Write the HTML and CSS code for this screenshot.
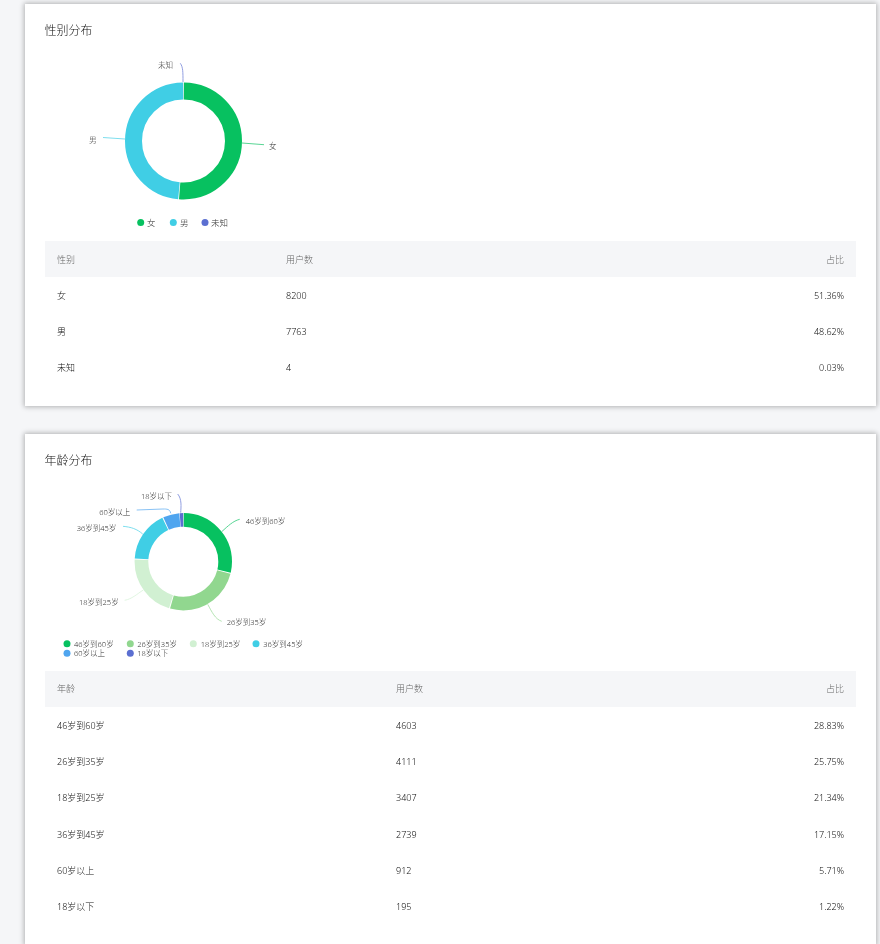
FILE: index.html
```html
<!DOCTYPE html>
<html lang="zh-CN">
<head>
<meta charset="utf-8">
<title>用户分布</title>
<link rel="stylesheet" href="styles.css">
</head>
<body>
<main class="page">
  <section class="card">
    <h2 class="card-title">性别分布</h2>
    <svg class="chart" viewBox="0 0 280 202" width="280" height="202">
      <g transform="rotate(-90 138.5 102)" fill="none" stroke-width="17">
        <circle class="s-green" cx="138.5" cy="102" r="50" pathLength="100" stroke-dasharray="51.14 48.86" stroke-dashoffset="-0.11"/>
        <circle class="s-cyan" cx="138.5" cy="102" r="50" pathLength="100" stroke-dasharray="48.4 51.6" stroke-dashoffset="-51.47"/>
        <circle class="s-indigo" cx="138.5" cy="102" r="50" pathLength="100" stroke-dasharray="0.02 99.98" stroke-dashoffset="-99.97"/>
      </g>
      <g fill="none" class="leaders">
        <path class="s-indigo" d="M138 43 C138 33 138 28 135.3 24.3"/>
        <path class="s-cyan" d="M80 100 L58 98.5"/>
        <path class="s-green" d="M197 104 L219 105.7"/>
      </g>
      <text class="label" x="113" y="29">未知</text>
      <text class="label" x="44" y="104">男</text>
      <text class="label" x="224" y="109.5">女</text>
      <circle class="f-green" cx="95.7" cy="183.6" r="3.5"/>
      <circle class="f-cyan" cx="128.3" cy="183.6" r="3.5"/>
      <circle class="f-indigo" cx="160" cy="183.6" r="3.5"/>
      <text class="legend-lg" x="102" y="186.6">女</text>
      <text class="legend-lg" x="135" y="186.6">男</text>
      <text class="legend-lg" x="166" y="186.6">未知</text>
    </svg>
    <table class="data gender">
      <thead><tr><th>性别</th><th>用户数</th><th class="num">占比</th></tr></thead>
      <tbody>
        <tr><td>女</td><td>8200</td><td class="num">51.36%</td></tr>
        <tr><td>男</td><td>7763</td><td class="num">48.62%</td></tr>
        <tr><td>未知</td><td>4</td><td class="num">0.03%</td></tr>
      </tbody>
    </table>
  </section>

  <section class="card">
    <h2 class="card-title">年龄分布</h2>
    <svg class="chart" viewBox="0 0 280 202" width="280" height="202">
      <g transform="rotate(-90 138.3 92.7)" fill="none" stroke-width="13.7">
        <circle class="s-green" cx="138.3" cy="92.7" r="41.85" pathLength="100" stroke-dasharray="28.5 71.5" stroke-dashoffset="-0.15"/>
        <circle class="s-lime" cx="138.3" cy="92.7" r="41.85" pathLength="100" stroke-dasharray="25.4 74.6" stroke-dashoffset="-29"/>
        <circle class="s-pale" cx="138.3" cy="92.7" r="41.85" pathLength="100" stroke-dasharray="21 79" stroke-dashoffset="-54.75"/>
        <circle class="s-cyan" cx="138.3" cy="92.7" r="41.85" pathLength="100" stroke-dasharray="16.8 83.2" stroke-dashoffset="-76.1"/>
        <circle class="s-blue" cx="138.3" cy="92.7" r="41.85" pathLength="100" stroke-dasharray="5.4 94.6" stroke-dashoffset="-93.25"/>
        <circle class="s-indigo" cx="138.3" cy="92.7" r="41.85" pathLength="100" stroke-dasharray="1.15 98.85" stroke-dashoffset="-98.8"/>
      </g>
      <g fill="none" class="leaders">
        <path class="s-green" d="M176.7 62.7 C183 57 188 52 194.7 50.3"/>
        <path class="s-lime" d="M162.7 135.3 C167 143 170 150 176.7 152.3"/>
        <path class="s-pale" d="M98.3 121 C92 125 87 130 79.7 131.3"/>
        <path class="s-cyan" d="M97.7 65 C92 60 86 58 78 57.3"/>
        <path class="s-blue" d="M125.7 44.3 C125 40 122 40 118 40 L91.7 41"/>
        <path class="s-indigo" d="M135.7 43.7 C136 38 137 30 132.7 25"/>
      </g>
      <text class="label" x="200.7" y="55.3">46岁到60岁</text>
      <text class="label" x="181.7" y="155.7">26岁到35岁</text>
      <text class="label" x="34" y="136">18岁到25岁</text>
      <text class="label" x="31.7" y="61.7">36岁到45岁</text>
      <text class="label" x="54.3" y="45.7">60岁以上</text>
      <text class="label" x="96" y="29.7">18岁以下</text>
      <circle class="f-green" cx="22" cy="174.7" r="3.5"/>
      <circle class="f-lime" cx="85.3" cy="174.7" r="3.5"/>
      <circle class="f-pale" cx="148.3" cy="174.7" r="3.5"/>
      <circle class="f-cyan" cx="211" cy="174.7" r="3.5"/>
      <circle class="f-blue" cx="22" cy="184.3" r="3.5"/>
      <circle class="f-indigo" cx="85.3" cy="184.3" r="3.5"/>
      <text class="label" x="29" y="177.5">46岁到60岁</text>
      <text class="label" x="92.3" y="177.5">26岁到35岁</text>
      <text class="label" x="155.7" y="177.5">18岁到25岁</text>
      <text class="label" x="218.3" y="177.5">36岁到45岁</text>
      <text class="label" x="29" y="187.2">60岁以上</text>
      <text class="label" x="92.3" y="187.2">18岁以下</text>
    </svg>
    <table class="data age">
      <thead><tr><th>年龄</th><th>用户数</th><th class="num">占比</th></tr></thead>
      <tbody>
        <tr><td>46岁到60岁</td><td>4603</td><td class="num">28.83%</td></tr>
        <tr><td>26岁到35岁</td><td>4111</td><td class="num">25.75%</td></tr>
        <tr><td>18岁到25岁</td><td>3407</td><td class="num">21.34%</td></tr>
        <tr><td>36岁到45岁</td><td>2739</td><td class="num">17.15%</td></tr>
        <tr><td>60岁以上</td><td>912</td><td class="num">5.71%</td></tr>
        <tr><td>18岁以下</td><td>195</td><td class="num">1.22%</td></tr>
      </tbody>
    </table>
  </section>
</main>
</body>
</html>
```

FILE: styles.css
```css
* { box-sizing: border-box; }
html, body { margin: 0; height: 944px; overflow: hidden; background: #f5f6f8; }
body { font-family: "Noto Sans", "Noto Sans CJK SC", sans-serif; font-weight: 300; color: #222; }
.page { display: flex; flex-direction: column; gap: 28px; padding: 4px 4px 0 25px; filter: blur(0.25px); }
.card { background: #fff; padding: 18px 20px 20px; box-shadow: 0 0 5px 1px rgba(0, 0, 0, 0.28); }
.card-title { margin: 0 0 -1px -0.5px; font-size: 12px; line-height: 18px; font-weight: 300; color: #111; }
.chart { display: block; }
.data { width: 100%; border-collapse: collapse; table-layout: fixed; font-size: 9px; }
.data th { height: 36px; padding: 0 12px; background: #f5f6f8; color: #666; font-weight: 300; text-align: left; }
.data td { height: 36.33px; padding: 0 12px; color: #111; }
.data .num { text-align: right; }
.gender th:first-child { width: 229px; }
.age th:first-child { width: 339px; }
.label { font-size: 7.5px; fill: #333; }
.legend-lg { font-size: 8.5px; fill: #333; }
.leaders { stroke-width: 0.9; opacity: 0.75; }
.s-green { stroke: #07c160; }
.s-lime { stroke: #91d78f; }
.s-pale { stroke: #d1f0d2; }
.s-cyan { stroke: #40cee5; }
.s-blue { stroke: #4fa5ef; }
.s-indigo { stroke: #5b6fd1; }
.f-green { fill: #07c160; }
.f-lime { fill: #91d78f; }
.f-pale { fill: #d1f0d2; }
.f-cyan { fill: #40cee5; }
.f-blue { fill: #4fa5ef; }
.f-indigo { fill: #5b6fd1; }
```
